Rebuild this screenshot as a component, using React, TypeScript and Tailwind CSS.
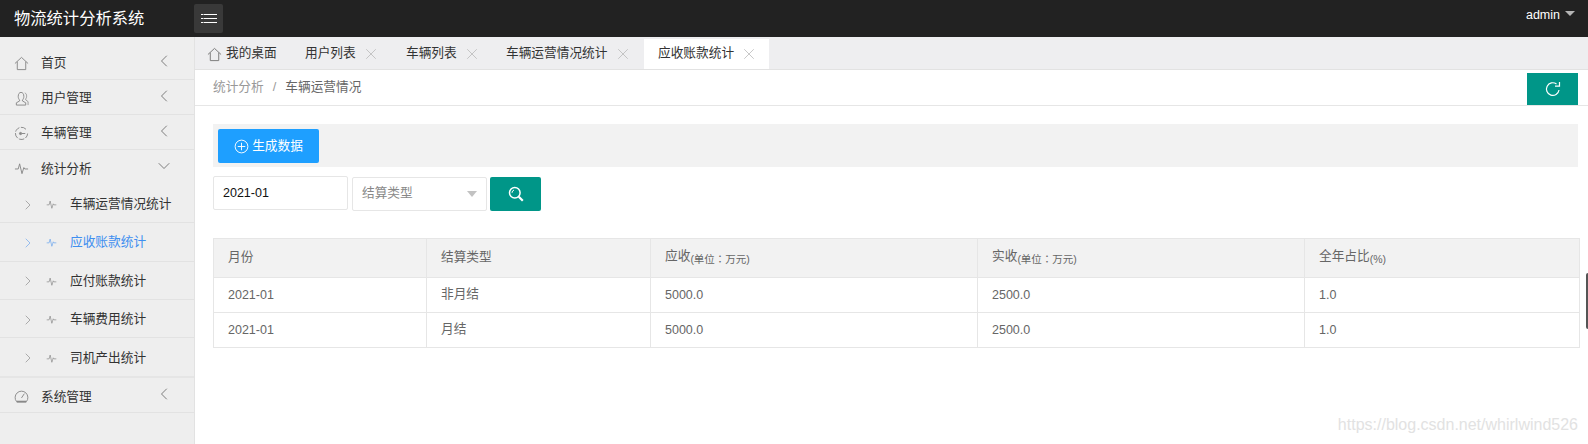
import React from 'react';
import { ChevronLeft, ChevronDown, ChevronRight, X } from 'lucide-react';

const fontStack = "font-['Liberation_Sans','Noto_Sans_CJK_SC',sans-serif]";

// Icons
const HomeIcon: React.FC<{ className?: string }> = ({ className }) => (
  <svg className={className} viewBox="0 0 16 16" fill="none" stroke="currentColor" strokeWidth="1">
    <path d="M1 8 8 1.500 15 8M3.500 6v8.500h9V6" />
  </svg>
);

const UserIcon: React.FC<{ className?: string }> = ({ className }) => (
  <svg className={className} viewBox="0 0 16 16" fill="none" stroke="currentColor" strokeWidth="1">
    <path d="M4.500 6c0-3 1.200-4.500 3-4.500s3 1.500 3 4.500c0 1.500-.8 3-1.500 3.600v1l3.500 2V15h-10v-2.400l3.500-2v-1C5.300 9 4.500 7.500 4.500 6Z" />
    <path d="M11.500 2c1.500.5 2 2 2 3.500 0 1.200-.5 2.500-1 3v1l2.500 1.800V15" strokeWidth=".8" />
  </svg>
);

const TimerIcon: React.FC<{ className?: string }> = ({ className }) => (
  <svg className={className} viewBox="0 0 16 16" fill="none" stroke="currentColor" strokeWidth="1">
    <path d="M12.800 3.500A6.500 6.500 0 1 0 14.500 8" strokeDasharray="6 1.500" />
    <path d="M8.500 8H12" />
    <circle cx="7" cy="8" r="1.200" fill="currentColor" />
  </svg>
);

const PulseIcon: React.FC<{ className?: string }> = ({ className }) => (
  <svg className={className} viewBox="0 0 16 16" fill="none" stroke="currentColor" strokeWidth="1">
    <path d="M1 8.500h3.500L6 3l2.500 10.500L10.500 7l1 1.500H15" />
  </svg>
);

const GaugeIcon: React.FC<{ className?: string }> = ({ className }) => (
  <svg className={className} viewBox="0 0 16 16" fill="none" stroke="currentColor" strokeWidth="1">
    <path d="M2.800 13.500a6.800 6.800 0 1 1 10.400 0Z" />
    <path d="M8 9.500 11 5" />
    <path d="M3 13.500h10" strokeWidth="2" />
  </svg>
);

const PlusCircleIcon: React.FC<{ className?: string }> = ({ className }) => (
  <svg className={className} viewBox="0 0 16 16" fill="none" stroke="currentColor" strokeWidth="1">
    <circle cx="8" cy="8" r="6.800" />
    <path d="M8 4v8M4 8h8" />
  </svg>
);

const SearchIcon: React.FC<{ className?: string }> = ({ className }) => (
  <svg className={className} viewBox="0 0 16 16" fill="none" stroke="currentColor">
    <circle cx="6.800" cy="6.800" r="5.300" strokeWidth="1.500" />
    <path d="M4 6.800a3 3 0 0 1 2-2.800" strokeWidth="1" />
    <path d="m10.800 10.800 4 4" strokeWidth="2.200" />
  </svg>
);

const RefreshIcon: React.FC<{ className?: string }> = ({ className }) => (
  <svg className={className} viewBox="0 0 16 16" fill="none" stroke="currentColor" strokeWidth="1.200">
    <path d="M14 9a6.300 6.300 0 1 1-2.500-6" />
    <path d="M10 5.200h4.500V1" />
  </svg>
);

const MenuIcon: React.FC<{ className?: string }> = ({ className }) => (
  <svg className={className} viewBox="0 0 16 10" fill="none" stroke="currentColor" strokeWidth="1">
    <path d="M0 .5h16M0 4.500h16M0 8.500h16" strokeDasharray="2 .5 13.500 0" />
  </svg>
);

// Navigation data
const subItems = [
  { label: '车辆运营情况统计' },
  { label: '应收账款统计', active: true },
  { label: '应付账款统计' },
  { label: '车辆费用统计' },
  { label: '司机产出统计' },
];

const tabs = [
  { label: '用户列表', width: 'w-[101px]' },
  { label: '车辆列表', width: 'w-[100px]' },
  { label: '车辆运营情况统计', width: 'w-[138px]' },
];

const Header: React.FC = () => (
  <header className="flex h-[37px] shrink-0 items-center bg-[#222222] text-white">
    <div className="w-[194px] pl-[14px] text-[16.3px]">物流统计分析系统</div>
    <button className="flex h-[29px] w-[29px] items-center justify-center rounded-[2px] bg-[#393939]">
      <MenuIcon className="h-[10px] w-[16px] text-white" />
    </button>
    <div className="ml-auto flex items-center gap-[5px] pr-[13px] text-[12.5px]">
      <span className="-mt-[6px]">admin</span>
      <span className="-mt-[10px] h-0 w-0 border-x-[5px] border-t-[5px] border-x-transparent border-t-[#b5b5b5]" />
    </div>
  </header>
);

const MenuRow: React.FC<{ icon: React.ReactNode; label: string; open?: boolean }> = ({ icon, label, open }) => (
  <div className={`flex h-[35px] items-center pl-[14px] pr-[20px] pt-[4px] text-[#333333] ${open ? '' : 'border-b border-[#e2e2e2]'}`}>
    <span className="-mt-[2px] w-[27px] text-[#888888]">{icon}</span>
    <span>{label}</span>
    <span className="-mt-[7px] ml-auto text-[#666666]">
      {open ? <ChevronDown size={20} strokeWidth={1} /> : <ChevronLeft size={20} strokeWidth={1} />}
    </span>
  </div>
);

const Sidebar: React.FC = () => (
  <aside className="w-[195px] shrink-0 border-r border-[#e2e2e2] bg-[#eeeeee] pt-[8px] text-[12.7px]">
    <MenuRow icon={<HomeIcon className="h-[15px] w-[15px]" />} label="首页" />
    <MenuRow icon={<UserIcon className="h-[15px] w-[15px]" />} label="用户管理" />
    <MenuRow icon={<TimerIcon className="h-[15px] w-[15px]" />} label="车辆管理" />
    <MenuRow icon={<PulseIcon className="h-[15px] w-[15px]" />} label="统计分析" open />
    <div className="border-b-2 border-[#e5e5e5]">
      {subItems.map((item, index) => (
        <div
          key={item.label}
          className={`flex h-[38.3px] items-center pl-[20px] pt-[2px] ${index < subItems.length - 1 ? 'border-b border-[#e2e2e2]' : ''} ${item.active ? 'text-[#3f8ff0]' : 'text-[#333333]'}`}
        >
          <ChevronRight size={16} strokeWidth={1} className={item.active ? 'text-[#6aa5ee]' : 'text-[#888888]'} />
          <PulseIcon className={`ml-[10px] h-[11px] w-[11px] ${item.active ? 'text-[#6aa5ee]' : 'text-[#888888]'}`} />
          <span className="ml-[13px]">{item.label}</span>
        </div>
      ))}
    </div>
    <MenuRow icon={<GaugeIcon className="h-[15px] w-[15px]" />} label="系统管理" />
  </aside>
);

const TabBar: React.FC = () => (
  <div className="flex h-[33px] shrink-0 items-end border-b border-[#e2e2e2] bg-[#eeeef0] text-[12.7px] text-[#333333]">
    <div className="flex h-[32px] w-[110px] items-center pl-[12px] pt-[2px]">
      <HomeIcon className="mr-[4px] h-[15px] w-[15px] text-[#777777]" />
      <span>我的桌面</span>
    </div>
    {tabs.map((tab) => (
      <div key={tab.label} className={`flex h-[32px] items-center pt-[2px] ${tab.width}`}>
        <span>{tab.label}</span>
        <X size={18} strokeWidth={1} className="ml-[6px] text-[#b5b5b5]" />
      </div>
    ))}
    <div className="flex h-[30px] w-[125px] items-center bg-white pl-[14px]">
      <span>应收账款统计</span>
      <X size={18} strokeWidth={1} className="ml-[6px] text-[#b5b5b5]" />
    </div>
  </div>
);

const Breadcrumb: React.FC = () => (
  <div className="flex h-[36px] shrink-0 items-center border-b border-[#e6e6e6] pl-[18px] pr-[10px] text-[12.7px]">
    <span className="text-[#999999]">统计分析</span>
    <span className="mx-[9px] text-[#999999]">/</span>
    <span className="text-[#666666]">车辆运营情况</span>
    <button className="ml-auto mt-[3px] flex h-[32px] w-[51px] items-center justify-center bg-[#009688] text-white">
      <RefreshIcon className="h-[16px] w-[16px]" />
    </button>
  </div>
);

const Cell: React.FC<{ children: React.ReactNode }> = ({ children }) => (
  <td className="border border-[#e6e6e6] pl-[14px] text-[12.5px]">{children}</td>
);

const HeadCell: React.FC<{ title: string; unit?: string; className: string }> = ({ title, unit, className }) => (
  <th className={`border border-[#e6e6e6] pl-[14px] text-left text-[12.7px] font-normal ${unit ? 'pb-[2px]' : ''} ${className}`}>
    {title}
    {unit && <sub className="font-['Liberation_Sans','Noto_Sans_CJK_TC',sans-serif] text-[10.5px]">{unit}</sub>}
  </th>
);

const DataTable: React.FC = () => (
  <table className="mt-[27px] w-[1366px] table-fixed border-collapse text-[#666666]">
    <thead>
      <tr className="h-[39px] bg-[#f2f2f2]">
        <HeadCell title="月份" className="w-[213px]" />
        <HeadCell title="结算类型" className="w-[224px]" />
        <HeadCell title="应收" unit="(单位：万元)" className="w-[327px]" />
        <HeadCell title="实收" unit="(单位：万元)" className="w-[327px]" />
        <HeadCell title="全年占比" unit="(%)" className="w-[275px]" />
      </tr>
    </thead>
    <tbody>
      <tr className="h-[35px]">
        <Cell>2021-01</Cell>
        <Cell><span className="text-[12.7px]">非月结</span></Cell>
        <Cell>5000.0</Cell>
        <Cell>2500.0</Cell>
        <Cell>1.0</Cell>
      </tr>
      <tr className="h-[35px]">
        <Cell>2021-01</Cell>
        <Cell><span className="text-[12.7px]">月结</span></Cell>
        <Cell>5000.0</Cell>
        <Cell>2500.0</Cell>
        <Cell>1.0</Cell>
      </tr>
    </tbody>
  </table>
);

const Content: React.FC = () => (
  <div className="pl-[18px] pr-[10px] pt-[18px]">
    <div className="flex h-[43px] items-center bg-[#f2f2f2] pl-[5px]">
      <button className="flex h-[34px] w-[101px] items-center justify-center gap-[3px] rounded-[2px] bg-[#1e9fff] pt-[3px] text-[12.7px] text-white">
        <PlusCircleIcon className="-mt-[1px] h-[15px] w-[15px]" />
        生成数据
      </button>
    </div>
    <div className="mt-[9px] flex items-start">
      <div className="flex h-[34px] w-[135px] items-center rounded-[2px] border border-[#e6e6e6] pl-[9px] text-[12.5px] text-[#111111]">
        2021-01
      </div>
      <div className="ml-[4px] mt-[1px] flex h-[34px] w-[135px] items-center justify-between rounded-[2px] border border-[#e6e6e6] pl-[9px] pr-[9px] text-[12.7px] text-[#888888]">
        结算类型
        <span className="h-0 w-0 border-x-[5px] border-t-[6px] border-x-transparent border-t-[#c2c2c2]" />
      </div>
      <button className="ml-[3px] mt-[1px] flex h-[34px] w-[51px] items-center justify-center rounded-[2px] bg-[#009688] text-white">
        <SearchIcon className="h-[16px] w-[16px]" />
      </button>
    </div>
    <DataTable />
  </div>
);

const App: React.FC = () => (
  <div className={`relative flex h-[444px] w-[1588px] flex-col overflow-hidden bg-white ${fontStack}`}>
    <Header />
    <div className="flex min-h-0 flex-1">
      <Sidebar />
      <main className="min-w-0 flex-1">
        <TabBar />
        <Breadcrumb />
        <Content />
      </main>
    </div>

    {/* Edge handle and watermark sit over the page */}
    <div className="absolute right-0 top-[273px] h-[56px] w-[2px] rounded-l-[2px] bg-[#555555]" />
    <div className="absolute bottom-[7px] right-[10px] text-[16px] text-[#e2e2e2]">https://blog.csdn.net/whirlwind526</div>
  </div>
);

export default App;
